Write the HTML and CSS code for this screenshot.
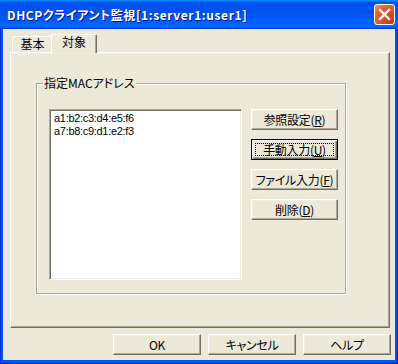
FILE: index.html
```html
<!DOCTYPE html>
<html lang="ja">
<head>
<meta charset="utf-8">
<link rel="stylesheet" href="styles.css">
</head>
<body>
<div class="window">
  <div class="titlebar">
    <span class="title">DHCPクライアント監視[1:server1:user1]</span>
    <span class="close">
      <svg width="21" height="21" viewBox="0 0 21 21"><path d="M6 6 L15 15 M15 6 L6 15" stroke="#fff" stroke-width="2.4" stroke-linecap="square"/></svg>
    </span>
  </div>
  <div class="client">
    <div class="tabs">
      <div class="tab">基本</div>
      <div class="tab active">対象</div>
    </div>
    <div class="panel">
      <div class="group">
        <span class="legend">指定MACアドレス</span>
        <div class="list">
          <div class="item">a1:b2:c3:d4:e5:f6</div>
          <div class="item">a7:b8:c9:d1:e2:f3</div>
        </div>
        <div class="side">
          <button class="btn side-btn">参照設定(<u>R</u>)</button>
          <button class="btn side-btn default">手動入力(<u>U</u>)</button>
          <button class="btn side-btn">ファイル入力(<u>F</u>)</button>
          <button class="btn side-btn">削除(<u>D</u>)</button>
        </div>
      </div>
    </div>
    <div class="footer">
      <button class="btn foot-btn">OK</button>
      <button class="btn foot-btn">キャンセル</button>
      <button class="btn foot-btn">ヘルプ</button>
    </div>
  </div>
</div>
</body>
</html>
```
FILE: styles.css
```css
* { box-sizing: border-box; }
html, body { margin: 0; padding: 0; }
body {
  width: 398px;
  height: 364px;
  overflow: hidden;
  font: 12px "Noto Sans CJK JP", "MS UI Gothic", sans-serif;
  font-feature-settings: "palt";
  color: #000;
}
.window {
  width: 398px;
  height: 364px;
  display: flex;
  flex-direction: column;
  background: #0055EA;
  box-shadow: inset 1px 0 #0831D9, inset -1px 0 #001EA0, inset 0 -1px #001EA0;
}
.titlebar {
  height: 29px;
  flex: none;
  display: flex;
  align-items: center;
  justify-content: space-between;
  padding: 0 3px 0 7px;
  background: linear-gradient(180deg, #0997ff, #0053ee 8%, #0050ee 40%, #0066ff 88%, #0066ff 93%, #005bff 95%, #003dd7 96%, #003dd7);
}
.title {
  color: #fff;
  font-weight: 700;
  font-size: 12px;
  letter-spacing: 0.6px;
  text-shadow: 1px 1px #0f1089;
  white-space: nowrap;
}
.close {
  width: 21px;
  height: 21px;
  border: 1px solid #fff;
  border-radius: 3px;
  background: radial-gradient(circle at 85% 85%, #c13a12 0%, #d9532a 45%, #e26a43 75%, #eb9a7e 100%);
  display: flex;
  align-items: center;
  justify-content: center;
}
.close svg { display: block; margin: -1px; }
.client {
  flex: 1;
  margin: 0 3px 4px 3px;
  background: #ECE9D8;
  display: flex;
  flex-direction: column;
}
.tabs {
  height: 23px;
  flex: none;
  display: flex;
  align-items: flex-end;
  padding-left: 7px;
}
.tab {
  width: 41px;
  height: 16px;
  margin-left: 2px;
  border-top: 1px solid #fff;
  border-left: 1px solid #fff;
  border-right: 1px solid #716F64;
  border-radius: 2px 2px 0 0;
  box-shadow: inset -1px 0 #ACA899;
  text-align: center;
  line-height: 14px;
  background: #ECE9D8;
}
.tab.active {
  width: 46px;
  height: 19px;
  margin-left: -2px;
  margin-bottom: -1px;
  position: relative;
  z-index: 1;
  line-height: 14px;
}
.panel {
  height: 276px;
  flex: none;
  margin: 0 5px 0 7px;
  border-top: 1px solid #fff;
  border-left: 1px solid #fff;
  border-right: 1px solid #716F64;
  border-bottom: 1px solid #716F64;
  box-shadow: inset -1px -1px #ACA899, inset 1px 1px #F1EFE2;
  padding: 30px 0 0 25px;
}
.group {
  position: relative;
  width: 310px;
  height: 211px;
  border: 1px solid #ACA899;
  box-shadow: inset 1px 1px #fff, 1px 1px #fff;
  display: flex;
  align-items: flex-start;
  padding: 25px 0 0 12px;
}
.legend {
  position: absolute;
  top: -8px;
  left: 6px;
  padding: 0 1px;
  line-height: 14px;
  background: #ECE9D8;
  white-space: nowrap;
}
.list {
  width: 193px;
  height: 171px;
  flex: none;
  background: #fff;
  border-top: 1px solid #ACA899;
  border-left: 1px solid #ACA899;
  border-right: 1px solid #fff;
  border-bottom: 1px solid #fff;
  box-shadow: inset 1px 1px #716F64, inset -1px -1px #F1EFE2;
  padding: 2px 4px;
  font-family: "Liberation Sans", Arial, sans-serif;
  font-size: 11px;
  letter-spacing: -0.3px;
}
.item { line-height: 13px; height: 13px; white-space: nowrap; }
.side {
  display: flex;
  flex-direction: column;
  gap: 9px;
  margin-left: 9px;
}
.btn {
  height: 21px;
  padding: 0;
  margin: 0;
  font: inherit;
  font-feature-settings: "palt";
  letter-spacing: -0.3px;
  color: #000;
  background: #ECE9D8;
  border-top: 1px solid #fff;
  border-left: 1px solid #fff;
  border-right: 1px solid #716F64;
  border-bottom: 1px solid #716F64;
  box-shadow: inset -1px -1px #ACA899, inset 1px 1px #F1EFE2;
  border-radius: 0;
  display: flex;
  align-items: center;
  justify-content: center;
  line-height: 14px;
  white-space: nowrap;
}
.btn u { text-underline-offset: 1px; }
.side-btn { width: 87px; }
.btn.default {
  border: 1px solid #000;
  box-shadow: inset 1px 1px #fff, inset -1px -1px #716F64, inset -2px -2px #ACA899;
  outline: 1px dotted #000;
  outline-offset: -5px;
}
.footer {
  display: flex;
  justify-content: flex-end;
  gap: 7px;
  padding: 6px 4px 0 0;
}
.foot-btn { width: 88px; }
```
